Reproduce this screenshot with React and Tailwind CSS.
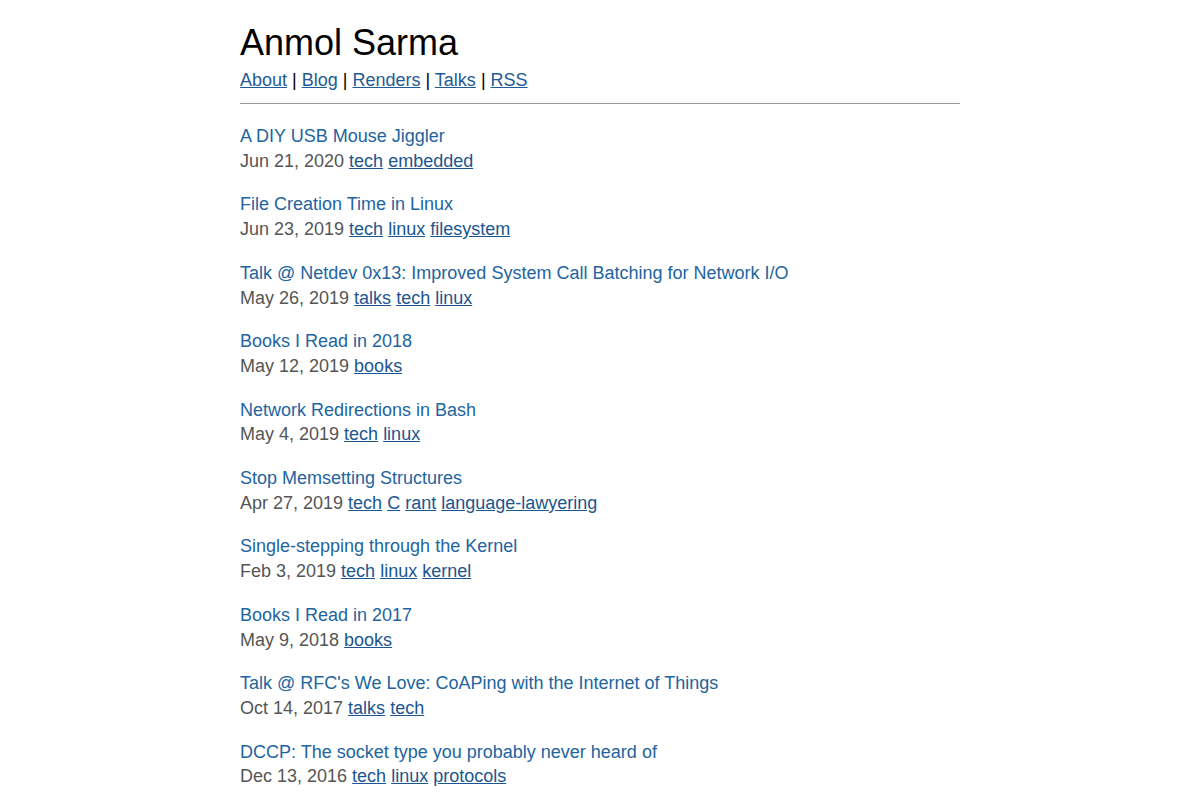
import React from 'react';

const posts = [
  { title: 'A DIY USB Mouse Jiggler', date: 'Jun 21, 2020', tags: ['tech', 'embedded'] },
  { title: 'File Creation Time in Linux', date: 'Jun 23, 2019', tags: ['tech', 'linux', 'filesystem'] },
  { title: 'Talk @ Netdev 0x13: Improved System Call Batching for Network I/O', date: 'May 26, 2019', tags: ['talks', 'tech', 'linux'] },
  { title: 'Books I Read in 2018', date: 'May 12, 2019', tags: ['books'] },
  { title: 'Network Redirections in Bash', date: 'May 4, 2019', tags: ['tech', 'linux'] },
  { title: 'Stop Memsetting Structures', date: 'Apr 27, 2019', tags: ['tech', 'C', 'rant', 'language-lawyering'] },
  { title: 'Single-stepping through the Kernel', date: 'Feb 3, 2019', tags: ['tech', 'linux', 'kernel'] },
  { title: 'Books I Read in 2017', date: 'May 9, 2018', tags: ['books'] },
  { title: "Talk @ RFC's We Love: CoAPing with the Internet of Things", date: 'Oct 14, 2017', tags: ['talks', 'tech'] },
  { title: 'DCCP: The socket type you probably never heard of', date: 'Dec 13, 2016', tags: ['tech', 'linux', 'protocols'] },
];

const navLinks = ['About', 'Blog', 'Renders', 'Talks', 'RSS'];

const App = () => {
  return (
    <div className="min-h-screen bg-white" style={{ fontFamily: '"Liberation Sans", Arial, sans-serif' }}>
      <div className="w-[720px] mx-auto pt-[18px]">
        {/* Header */}
        <h1 className="text-[36px] leading-[50px] text-black">Anmol Sarma</h1>
        <nav className="text-[18px] leading-[24px] text-black">
          {navLinks.map((link, i) => (
            <span key={link}>
              <a href="#" className="text-[#1f5c96] underline">{link}</a>
              {i < navLinks.length - 1 && ' | '}
            </span>
          ))}
        </nav>
        <hr className="border-0 border-t border-[#999] mt-[11px] mb-[19px]" />

        {/* Posts */}
        <div>
          {posts.map(post => (
            <div key={post.title} className="mb-[17px] text-[18px]">
              <div className="pt-[1px] leading-[24.7px]">
                <a href="#" className="text-[#22649f]">{post.title}</a>
              </div>
              <div className="leading-[25.7px] text-[#555]">
                {post.date}
                {post.tags.map(tag => (
                  <span key={tag}>
                    {' '}
                    <a href="#" className="text-[#1c5690] underline">{tag}</a>
                  </span>
                ))}
              </div>
            </div>
          ))}
        </div>
      </div>
    </div>
  );
};

export default App;
